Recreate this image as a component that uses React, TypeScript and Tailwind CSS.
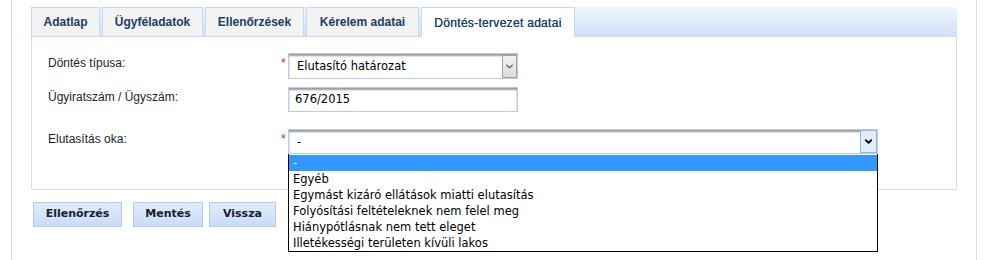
import { ChevronDown } from "lucide-react";

const tabs = [
  { label: "Adatlap", w: "w-[69px]" },
  { label: "Ügyféladatok", w: "w-[101px]" },
  { label: "Ellenőrzések", w: "w-[99px]" },
  { label: "Kérelem adatai", w: "w-[113px]" },
];

const reasons = [
  "Egyéb",
  "Egymást kizáró ellátások miatti elutasítás",
  "Folyósítási feltételeknek nem felel meg",
  "Hiánypótlásnak nem tett eleget",
  "Illetékességi területen kívüli lakos",
];

const fieldFont = "font-['DejaVu_Sans',sans-serif] text-[11.5px] text-black";
const labelFont = "font-['Liberation_Sans',Arial,sans-serif] text-[12px] leading-[14px] text-[#1e1e1e]";

export default function App() {
  return (
    <div className="h-[260px] w-[987px] overflow-hidden bg-white">
      <div className="ml-[11px] h-full w-[966px] border-x border-[#dcdcdc] pl-[19px] pt-[7px]">
        {/* ── Tabs ── */}
        <div className="flex h-[30px] w-[926px] gap-[2px] bg-gradient-to-b from-[#f1f6fe] to-[#cddff8] font-['Liberation_Sans',Arial,sans-serif] text-[12px]">
          {tabs.map((t) => (
            <div
              key={t.label}
              className={`${t.w} flex items-center justify-center border border-[#c6d9f3] bg-[#f3f3f3] font-bold text-[#1d3c62]`}
            >
              {t.label}
            </div>
          ))}
          <div className="flex w-[154px] items-center justify-center border-x border-t border-[#c6d9f3] bg-white tracking-[0.3px] text-[#1c4270] [text-shadow:0_0_0.4px_#1c4270]">
            Döntés-tervezet adatai
          </div>
        </div>

        {/* ── Panel ── */}
        <div className="h-[153px] w-[926px] border-x border-b border-[#dcdcdc] pl-[16px] pt-[16px]">
          <div className="flex flex-col">
            {/* Döntés típusa */}
            <div className="flex items-start">
              <div className={`${labelFont} w-[233px] pt-[3px]`}>Döntés típusa:</div>
              <div className="w-[7px] pt-[3px] font-['Liberation_Sans',Arial,sans-serif] text-[12px] leading-[14px] text-[#e01b1b]">*</div>
              <div className={`${fieldFont} flex h-[26px] w-[230px] border border-[#b6cdee] shadow-[inset_0_2px_2px_#9a9a9a]`}>
                <div className="flex flex-1 items-center pl-[8px] pt-[1px]">Elutasító határozat</div>
                <div className="mt-[1px] flex h-[23px] w-[15px] items-center justify-center border border-[#a3a3a3] bg-gradient-to-b from-[#f2f2f2] to-[#dcdcdc] text-[#555]">
                  <ChevronDown size={11} strokeWidth={3} />
                </div>
              </div>
            </div>

            {/* Ügyiratszám */}
            <div className="mt-[8px] flex items-start">
              <div className={`${labelFont} w-[240px] pt-[3px]`}>Ügyiratszám / Ügyszám:</div>
              <div className={`${fieldFont} flex h-[25px] w-[230px] items-center border border-[#b6cdee] pl-[6px] pt-[1px] shadow-[inset_0_2px_2px_#9a9a9a]`}>
                676/2015
              </div>
            </div>

            {/* Elutasítás oka */}
            <div className="mt-[17px] flex items-start">
              <div className={`${labelFont} w-[233px] pt-[3px]`}>Elutasítás oka:</div>
              <div className="w-[7px] pt-[3px] font-['Liberation_Sans',Arial,sans-serif] text-[12px] leading-[14px] text-[#e01b1b]">*</div>
              <div className="relative">
                <div className={`${fieldFont} flex h-[25px] w-[590px] border border-[#b6cdee] shadow-[inset_0_2px_2px_#9a9a9a]`}>
                  <div className="flex flex-1 items-center pl-[8px] pt-[2px]">-</div>
                  <div className="flex h-[23px] w-[17px] items-center justify-center border border-[#93b6e6] bg-[#e1ecfc] text-black">
                    <ChevronDown size={11} strokeWidth={4} />
                  </div>
                </div>
                {/* open list */}
                <div className={`${fieldFont} absolute left-0 top-full z-10 w-[590px] border-x border-b border-black bg-white pt-[1px] leading-[16px]`}>
                  <div className="h-[16px] bg-[#3399ff] pl-[4px] text-white">-</div>
                  {reasons.map((r) => (
                    <div key={r} className="h-[16px] pl-[4px]">
                      {r}
                    </div>
                  ))}
                </div>
              </div>
            </div>
          </div>
        </div>

        {/* ── Buttons ── */}
        <div className="ml-[2px] mt-[12px] flex font-['DejaVu_Sans',sans-serif] text-[11px] font-bold text-[#16202e]">
          <button className="h-[25px] w-[89px] border border-[#b3cbed] bg-gradient-to-b from-[#e1ecfc] to-[#c9dcf7]">
            Ellenőrzés
          </button>
          <button className="ml-[11px] h-[25px] w-[70px] border border-[#b3cbed] bg-gradient-to-b from-[#e1ecfc] to-[#c9dcf7]">
            Mentés
          </button>
          <button className="ml-[6px] h-[25px] w-[67px] border border-[#b3cbed] bg-gradient-to-b from-[#e1ecfc] to-[#c9dcf7]">
            Vissza
          </button>
        </div>
      </div>
    </div>
  );
}
